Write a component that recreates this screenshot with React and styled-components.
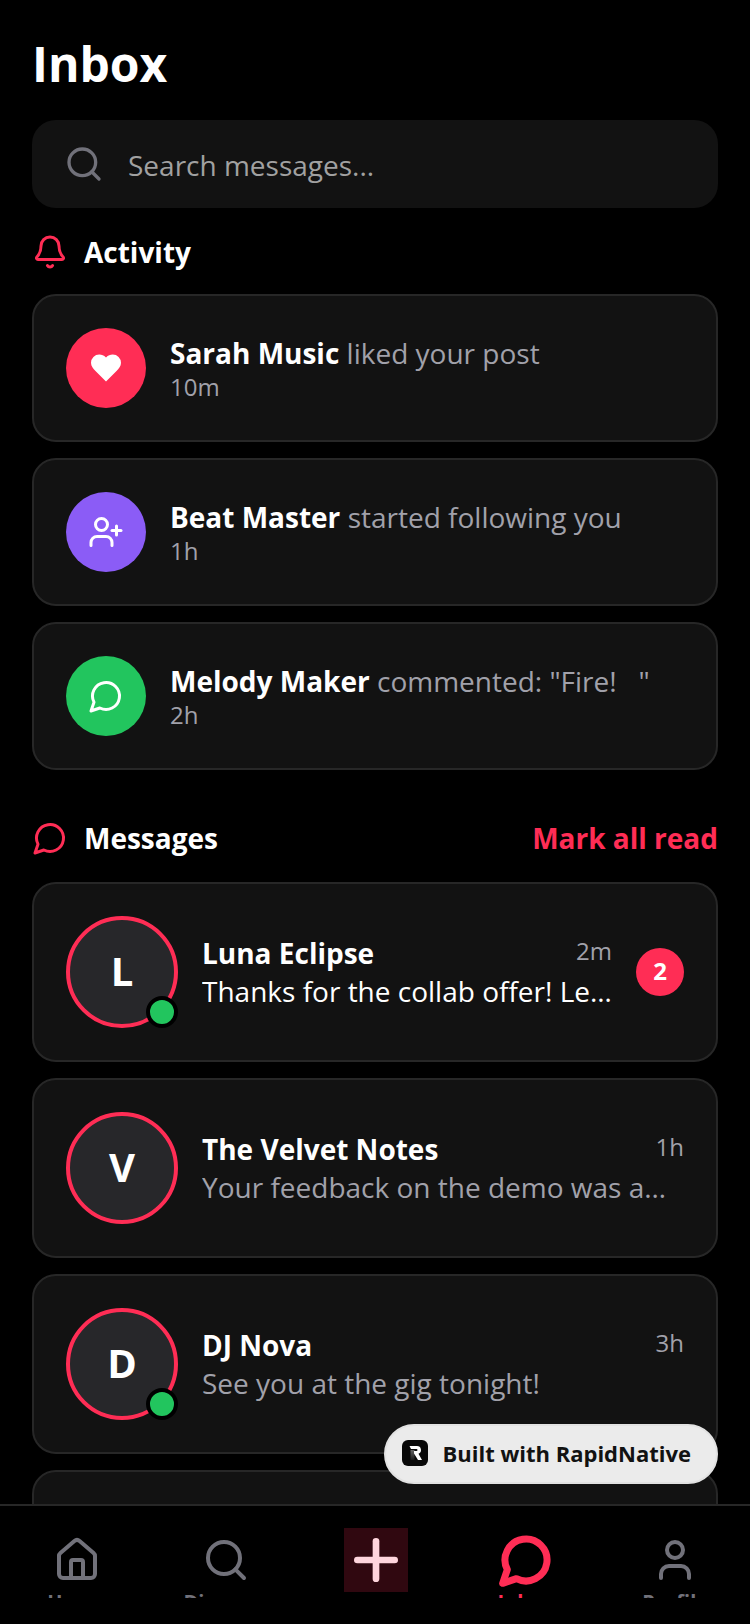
import React from "react";
import styled, { createGlobalStyle } from "styled-components";
import { Bell, House, Plus, Search, User, UserPlus } from "lucide-react";

const GlobalStyle = createGlobalStyle`
  * {
    box-sizing: border-box;
  }
  body {
    margin: 0;
    background: #000;
    color: #fff;
    font-family: "Open Sans", "Noto Sans", sans-serif;
  }
  h1, h2, ul, p {
    margin: 0;
    padding: 0;
  }
  ul {
    list-style: none;
  }
  button, input {
    font-family: inherit;
  }
`;

const Screen = styled.div`
  display: flex;
  flex-direction: column;
  height: 100vh;
  background: #000;
`;

const Main = styled.main`
  flex: 1;
  min-height: 0;
  overflow: hidden;
  padding: 32px 32px 0;
`;

const Title = styled.h1`
  font-size: 48px;
  line-height: 64px;
  font-weight: 700;
  margin-bottom: 24px;
`;

const SearchBox = styled.label`
  display: flex;
  align-items: center;
  gap: 24px;
  height: 88px;
  padding: 0 32px;
  margin-bottom: 26px;
  border-radius: 24px;
  background: #121212;
  color: #71717a;
`;

const SearchInput = styled.input`
  flex: 1;
  min-width: 0;
  height: 40px;
  padding: 2px 0 0;
  border: 0;
  outline: 0;
  background: transparent;
  color: #fff;
  font-size: 28px;
  &::placeholder {
    color: #a1a1a1;
    opacity: 1;
  }
`;

const Section = styled.section`
  margin-bottom: 48px;
`;

const SectionHeader = styled.div`
  display: flex;
  align-items: center;
  gap: 16px;
  margin-bottom: 24px;
  color: #ff2d55;
`;

const SectionTitle = styled.h2`
  flex: 1;
  color: #fff;
  font-size: 28px;
  line-height: 36px;
  font-weight: 700;
`;

const MarkRead = styled.button`
  padding: 0;
  border: 0;
  background: none;
  color: #ff2d55;
  font-size: 28px;
  line-height: 40px;
  font-weight: 700;
`;

const List = styled.ul`
  display: flex;
  flex-direction: column;
  gap: 16px;
`;

const Card = styled.li`
  display: flex;
  align-items: center;
  gap: 24px;
  min-height: ${props => (props.$tall ? "180px" : "148px")};
  padding: 32px;
  border: 2px solid #272727;
  border-radius: 24px;
  background: #121212;
`;

const ActivityIcon = styled.span`
  display: flex;
  align-items: center;
  justify-content: center;
  flex: none;
  width: 80px;
  height: 80px;
  border-radius: 50%;
  background: ${props => props.$color};
`;

const Body = styled.div`
  flex: 1;
  min-width: 0;
`;

const ActivityText = styled.p`
  color: #a1a1aa;
  font-size: 28px;
  line-height: 38px;
`;

const Name = styled.strong`
  color: #fff;
  font-size: 28px;
  line-height: 38px;
  font-weight: 700;
`;

const Time = styled.time`
  display: block;
  color: #a1a1aa;
  font-size: 24px;
  line-height: ${props => (props.$inRow ? "34px" : "30px")};
`;

const Avatar = styled.div`
  position: relative;
  display: flex;
  align-items: center;
  justify-content: center;
  flex: none;
  width: 112px;
  height: 112px;
  padding-bottom: 4px;
  border: 4px solid #ff2d55;
  border-radius: 50%;
  background: #27272a;
  font-size: 40px;
  font-weight: 700;
`;

const OnlineDot = styled.span`
  position: absolute;
  right: -4px;
  bottom: -4px;
  width: 32px;
  height: 32px;
  border: 4px solid #000;
  border-radius: 50%;
  background: #22c55e;
`;

const NameRow = styled.div`
  display: flex;
  align-items: flex-start;
  justify-content: space-between;
  height: 38px;
`;

const Preview = styled.p`
  overflow: hidden;
  text-overflow: ellipsis;
  white-space: nowrap;
  color: ${props => (props.$unread ? "#fff" : "#a1a1aa")};
  font-size: 28px;
  line-height: 38px;
`;

const UnreadBadge = styled.span`
  display: flex;
  align-items: center;
  justify-content: center;
  flex: none;
  width: 48px;
  height: 48px;
  padding-bottom: 2px;
  border-radius: 50%;
  background: #ff2d55;
  font-size: 24px;
  line-height: 32px;
  font-weight: 700;
`;

const BuiltWith = styled.a`
  position: fixed;
  right: 32px;
  bottom: 140px;
  display: flex;
  align-items: center;
  gap: 14px;
  height: 60px;
  padding: 0 25px 2px 16px;
  border: 2px solid #e2e2e2;
  border-radius: 30px;
  background: #ebebeb;
  color: #121212;
  font-size: 22px;
  font-weight: 700;
  text-decoration: none;
`;

const Nav = styled.nav`
  display: grid;
  grid-template-columns: repeat(5, 1fr);
  padding: 0 0 26px 2px;
  border-top: 2px solid #272727;
  background: #000;
`;

const NavLink = styled.a`
  display: flex;
  flex-direction: column;
  align-items: center;
  height: 92px;
  padding-top: 24px;
  overflow: hidden;
  color: ${props => (props.$active ? "#ff2d55" : "#71717a")};
  font-size: 20px;
  line-height: 24px;
  font-weight: 700;
  text-decoration: none;
`;

const NavIcon = styled.span`
  display: flex;
  align-items: center;
  justify-content: center;
  flex: none;
  height: 60px;
`;

const CreateButton = styled.button`
  place-self: center;
  display: flex;
  width: 64px;
  height: 64px;
  margin-top: 16px;
  padding: 0;
  border: 0;
  background: #300810;
  color: #ffd5dd;
`;

const MessageBubble = ({ size = 36, strokeWidth = 2 }) => (
  <svg
    width={size}
    height={size}
    viewBox="0 0 24 24"
    fill="none"
    stroke="currentColor"
    strokeWidth={strokeWidth}
    strokeLinecap="round"
    strokeLinejoin="round"
    aria-hidden="true"
  >
    <path d="M7.9 20A9 9 0 1 0 4 16.1L2 22Z" />
  </svg>
);

const HeartFilled = () => (
  <svg width="36" height="36" viewBox="0 0 24 24" fill="#fff" aria-hidden="true">
    <path d="M19 14c1.49-1.46 3-3.21 3-5.5A5.5 5.5 0 0 0 16.5 3c-1.76 0-3 .5-4.5 2-1.5-1.5-2.74-2-4.5-2A5.5 5.5 0 0 0 2 8.5c0 2.3 1.5 4.05 3 5.5l7 7Z" />
  </svg>
);

const RapidLogo = () => (
  <svg width="26" height="26" viewBox="0 0 26 26" aria-hidden="true">
    <defs>
      <linearGradient id="leg" x1="0" y1="0" x2="0" y2="1">
        <stop offset="0" stopColor="#666" />
        <stop offset="1" stopColor="#1a1a1a" />
      </linearGradient>
    </defs>
    <rect width="26" height="26" rx="6" fill="#080808" />
    <path d="M8.5 10h4v10h-4z" fill="url(#leg)" />
    <path
      d="M7.5 6H15a4 4 0 0 1 1.5 7.700L20 20h-4l-4-6.500V11h2.500a1 1 0 0 0 0-2H9z"
      fill="#fff"
    />
  </svg>
);

const activities = [
  { name: "Sarah Music", text: "liked your post", time: "10m", color: "#ff2d55", icon: <HeartFilled /> },
  { name: "Beat Master", text: "started following you", time: "1h", color: "#8b5cf6", icon: <UserPlus size={36} /> },
  { name: "Melody Maker", text: 'commented: "Fire!\u00a0\u00a0\u00a0"', time: "2h", color: "#22c55e", icon: <MessageBubble /> }
];

const threads = [
  { name: "Luna Eclipse", text: "Thanks for the collab offer! Let's talk", time: "2m", online: true, unread: 2 },
  { name: "The Velvet Notes", text: "Your feedback on the demo was amazing", time: "1h" },
  { name: "DJ Nova", text: "See you at the gig tonight!", time: "3h", online: true }
];

const App = () => (
  <Screen>
    <GlobalStyle />
    <Main>
      <Title>Inbox</Title>
      <SearchBox htmlFor="search">
        <Search size={40} aria-label="Search" />
        <SearchInput id="search" type="text" placeholder="Search messages..." />
      </SearchBox>
      <Section>
        <SectionHeader>
          <Bell size={36} />
          <SectionTitle>Activity</SectionTitle>
        </SectionHeader>
        <List>
          {activities.map(item => (
            <Card key={item.name}>
              <ActivityIcon $color={item.color}>{item.icon}</ActivityIcon>
              <Body>
                <ActivityText>
                  <Name>{item.name}</Name> {item.text}
                </ActivityText>
                <Time>{item.time}</Time>
              </Body>
            </Card>
          ))}
        </List>
      </Section>
      <Section>
        <SectionHeader>
          <MessageBubble />
          <SectionTitle>Messages</SectionTitle>
          <MarkRead type="button">Mark all read</MarkRead>
        </SectionHeader>
        <List>
          {threads.map(thread => (
            <Card key={thread.name} $tall>
              <Avatar>
                {thread.name.replace("The ", "").charAt(0)}
                {thread.online && <OnlineDot />}
              </Avatar>
              <Body>
                <NameRow>
                  <Name>{thread.name}</Name>
                  <Time $inRow>{thread.time}</Time>
                </NameRow>
                <Preview $unread={thread.unread}>{thread.text}</Preview>
              </Body>
              {thread.unread && <UnreadBadge>{thread.unread}</UnreadBadge>}
            </Card>
          ))}
          <Card $tall aria-hidden="true" />
        </List>
      </Section>
    </Main>
    <BuiltWith href="#rapidnative">
      <RapidLogo />
      Built with RapidNative
    </BuiltWith>
    <Nav>
      <NavLink href="#home">
        <NavIcon><House size={48} /></NavIcon>
        Home
      </NavLink>
      <NavLink href="#discover">
        <NavIcon><Search size={48} /></NavIcon>
        Discover
      </NavLink>
      <CreateButton type="button" aria-label="Create">
        <Plus size={64} strokeWidth={2.5} />
      </CreateButton>
      <NavLink href="#inbox" $active>
        <NavIcon><MessageBubble size={56} strokeWidth={3} /></NavIcon>
        Inbox
      </NavLink>
      <NavLink href="#profile">
        <NavIcon><User size={48} /></NavIcon>
        Profile
      </NavLink>
    </Nav>
  </Screen>
);

export default App;
